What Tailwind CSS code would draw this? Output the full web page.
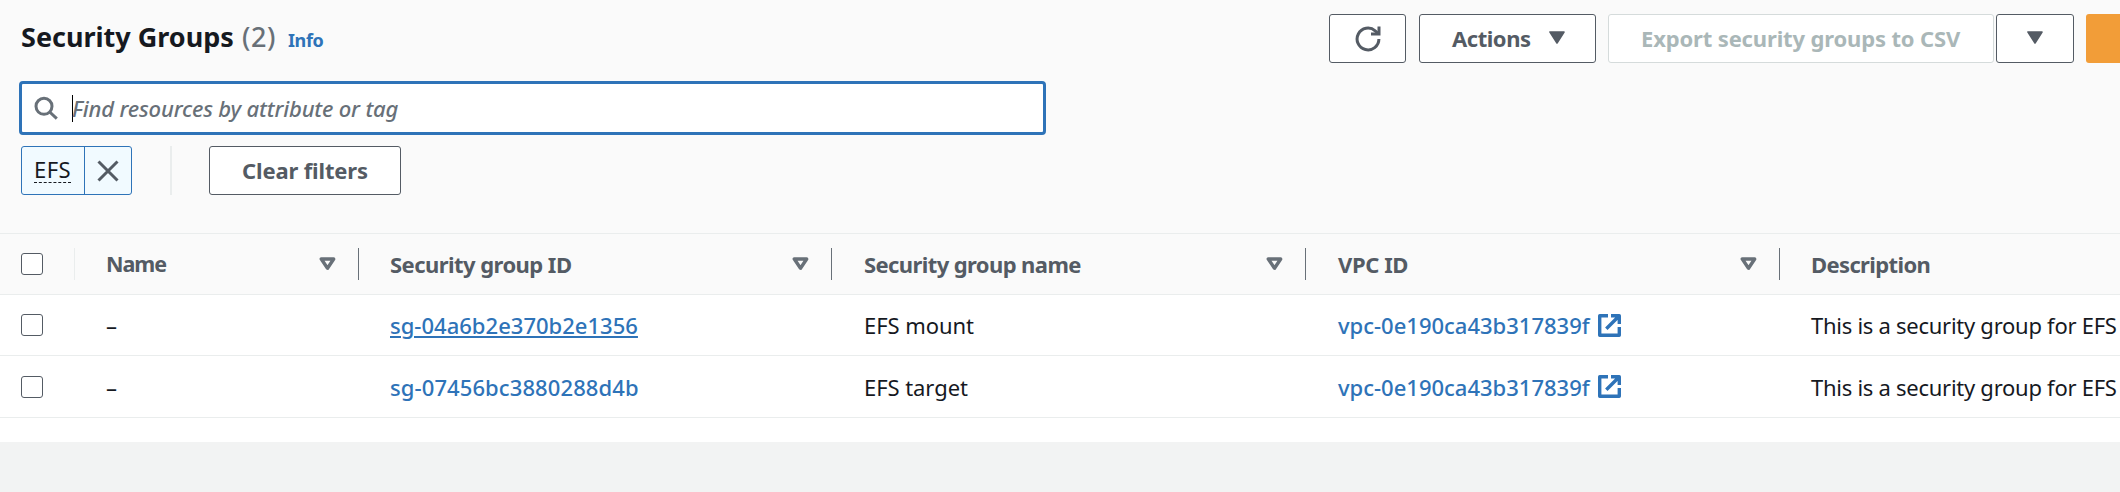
<!DOCTYPE html>
<html lang="en">
<head>
<meta charset="utf-8">
<title>Security Groups</title>
<script src="https://cdn.jsdelivr.net/npm/@tailwindcss/browser@4"></script>
</head>
<body class="h-[492px] overflow-hidden bg-[#f2f3f3] font-['Noto_Sans','Open_Sans',sans-serif] text-[22px] leading-[30px] text-[#16191f]">
<svg class="hidden">
  <symbol id="sort" viewBox="0 0 17 14"><path d="M2.3 2h12.4L8.5 11.2z" fill="none" stroke="currentColor" stroke-width="3.4" stroke-linejoin="round"/></symbol>
  <symbol id="caret" viewBox="0 0 16 14"><path d="M1 1h14L8 12z" fill="currentColor" stroke="currentColor" stroke-width="1.6" stroke-linejoin="round"/></symbol>
  <symbol id="external" viewBox="0 0 23 23"><path d="M10 1.7H1.7v19.6h19.6V13M13 1.7h8.3V10M20.8 2.2L8.3 14.7" fill="none" stroke="currentColor" stroke-width="3.4" stroke-linejoin="round"/></symbol>
</svg>
<main class="h-[442px] w-[2120px] overflow-hidden bg-white">
  <header class="h-[234px] border-b border-[#eaeded] bg-[#fafafa] pl-5 pt-3.5">
    <div class="flex h-[49px]">
      <h1 class="flex w-[1309px] shrink-0 items-baseline whitespace-nowrap pl-px text-[27px] leading-[45px]">
        <span class="font-bold">Security Groups</span>
        <span class="ml-2 font-medium tracking-[0.6px] text-[#687078]">(2)</span>
        <a class="ml-3 text-[18px] font-bold tracking-[-0.4px] text-[#2e73b8]">Info</a>
      </h1>
      <div class="flex shrink-0 font-bold text-[#545b64]">
        <button class="flex w-[77px] items-center justify-center rounded-[3px] border border-[#545b64] bg-white" aria-label="Refresh">
          <svg class="h-[26px] w-[26px]" viewBox="0 0 26 26" fill="none" stroke="currentColor" stroke-width="3"><path d="M23.9 13A10.9 10.9 0 1 1 20.2 4.8L23.8 8"/><path d="M24 0.5V8H16"/></svg>
        </button>
        <button class="ml-[13px] flex w-[177px] items-center rounded-[3px] border border-[#545b64] bg-white pb-px pl-8">
          <span class="w-[97px] text-left tracking-[-0.46px]">Actions</span>
          <svg class="h-3.5 w-4"><use href="#caret"/></svg>
        </button>
        <button class="ml-3 flex w-[386px] items-center rounded-[3px] border border-[#d5dbdb] bg-white pb-px pl-8 text-[#aab7b8]">
          <span class="whitespace-nowrap tracking-[-0.15px]">Export security groups to CSV</span>
        </button>
        <button class="ml-0.5 flex w-[78px] items-center justify-center rounded-[3px] border border-[#545b64] bg-white pb-px" aria-label="More export options">
          <svg class="h-3.5 w-4"><use href="#caret"/></svg>
        </button>
        <button class="ml-3 w-[120px] rounded-[3px] bg-[#f29d38]" aria-label="Create security group"></button>
      </div>
    </div>
    <div class="-ml-px mt-[18px] flex h-[54px] w-[1027px] items-center rounded-[4px] border-[3px] border-[#2e73b8] bg-white pl-[12px]">
      <svg class="h-6 w-6 text-[#687078]" viewBox="0 0 24 24" fill="none" stroke="currentColor" stroke-width="3"><circle cx="10" cy="10.3" r="8"/><path d="M15.7 16L22.8 22.7"/></svg>
      <span class="ml-[14px] h-[27px] w-px bg-black"></span>
      <span class="-ml-px pb-px font-medium italic tracking-[-0.16px] text-[#687078]">Find resources by attribute or tag</span>
    </div>
    <div class="mt-[11px] flex h-[49px] pl-px">
      <div class="flex w-[111px] rounded-[3px] border border-[#2e73b8] bg-[#f1faff]">
        <span class="flex w-[63px] items-center border-r border-[#2e73b8] pl-3">
          <span class="h-[25px] border-b border-dashed border-[#16191f] leading-[22px] tracking-[0.4px]">EFS</span>
        </span>
        <span class="flex flex-1 items-center justify-center">
          <svg class="h-[22px] w-[22px] text-[#545b64]" viewBox="0 0 22 22" fill="none" stroke="currentColor" stroke-width="3"><path d="M1.5 1.5l19 19M20.5 1.5l-19 19"/></svg>
        </span>
      </div>
      <span class="ml-[38px] w-0.5 bg-[#eaeded]"></span>
      <button class="ml-[37px] flex w-[192px] items-center justify-center rounded-[3px] border border-[#545b64] bg-white pb-px font-bold tracking-[-0.14px] text-[#545b64]">Clear filters</button>
    </div>
  </header>

  <section class="whitespace-nowrap">
    <div class="grid h-[61px] grid-cols-[75px_284px_473px_474px_474px_340px] items-center border-b border-[#eaeded] bg-[#fafafa] font-bold text-[#545b64]">
      <div class="flex h-8 items-center border-r border-[#eaeded] pl-[21px]"><span class="h-[22px] w-[22px] rounded-[3px] border border-[#545b64] bg-white"></span></div>
      <div class="flex h-8 items-center justify-between border-r border-[#687078] pl-[31px] pr-[22px]"><span class="text-[21.5px] tracking-[-1px]">Name</span><svg class="h-3.5 w-[17px] text-[#687078]"><use href="#sort"/></svg></div>
      <div class="flex h-8 items-center justify-between border-r border-[#687078] pl-[31px] pr-[22px]"><span class="tracking-[-0.55px]">Security group ID</span><svg class="h-3.5 w-[17px] text-[#687078]"><use href="#sort"/></svg></div>
      <div class="flex h-8 items-center justify-between border-r border-[#687078] pl-8 pr-[22px]"><span class="tracking-[-0.6px]">Security group name</span><svg class="h-3.5 w-[17px] text-[#687078]"><use href="#sort"/></svg></div>
      <div class="flex h-8 items-center justify-between border-r border-[#687078] pl-8 pr-[22px]"><span class="tracking-[-0.4px]">VPC ID</span><svg class="h-3.5 w-[17px] text-[#687078]"><use href="#sort"/></svg></div>
      <div class="pl-[31px] tracking-[-0.63px]">Description</div>
    </div>
    <div class="grid h-[61px] grid-cols-[75px_284px_473px_474px_474px_340px] items-center border-b border-[#eaeded]">
      <div class="pl-[21px]"><span class="block h-[22px] w-[22px] rounded-[3px] border border-[#545b64] bg-white"></span></div>
      <div class="pl-[31px]">–</div>
      <div class="pl-[31px] font-medium tracking-[0.02px] text-[#2e73b8]"><a class="underline decoration-2 underline-offset-2">sg-04a6b2e370b2e1356</a></div>
      <div class="pl-8 tracking-[-0.07px]">EFS mount</div>
      <div class="flex items-center pl-8 font-medium text-[#2e73b8]"><a class="w-[260px]">vpc-0e190ca43b317839f</a><svg class="h-[23px] w-[23px]"><use href="#external"/></svg></div>
      <div class="pl-[31px] tracking-[-0.27px]">This is a security group for EFS</div>
    </div>
    <div class="grid h-[62px] grid-cols-[75px_284px_473px_474px_474px_340px] items-center border-b border-[#eaeded]">
      <div class="pl-[21px]"><span class="block h-[22px] w-[22px] rounded-[3px] border border-[#545b64] bg-white"></span></div>
      <div class="pl-[31px]">–</div>
      <div class="pl-[31px] font-medium tracking-[0.1px] text-[#2e73b8]"><a>sg-07456bc3880288d4b</a></div>
      <div class="pl-8 tracking-[-0.06px]">EFS target</div>
      <div class="flex items-center pl-8 font-medium text-[#2e73b8]"><a class="w-[260px]">vpc-0e190ca43b317839f</a><svg class="h-[23px] w-[23px]"><use href="#external"/></svg></div>
      <div class="pl-[31px] tracking-[-0.27px]">This is a security group for EFS</div>
    </div>
  </section>
</main>
</body>
</html>
